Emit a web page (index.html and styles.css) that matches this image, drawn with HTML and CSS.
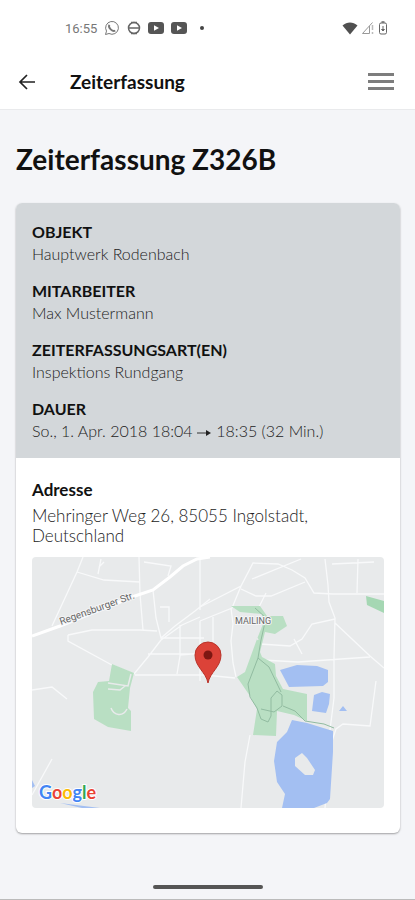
FILE: index.html
```html
<!DOCTYPE html>
<html lang="de">
<head>
  <meta charset="UTF-8">
  <meta name="viewport" content="width=device-width, initial-scale=1.0">
  <title>Zeiterfassung Z326B</title>
  <link rel="stylesheet" href="styles.css">
</head>
<body>
  <div class="status-bar">
    <div class="status-left">
      <span class="clock">16:55</span>
      <svg width="16" height="16" viewBox="0 0 16 16" fill="none" stroke="#777">
        <path d="M1.5 14.5l1-3.4A6.4 6.4 0 1 1 5 13.5z"/>
        <path d="M5.5 4.8c-1 1.2-.3 3 1.200 4.500s3.300 2.200 4.500 1.300" stroke-width="1.900"/>
      </svg>
      <svg width="14" height="14" viewBox="0 0 14 14" fill="none" stroke="#666" stroke-width="1.500">
        <circle cx="7" cy="7" r="5.500"/>
        <path d="M1 7h12M4 1.500h6M4 12.500h6"/>
      </svg>
      <svg width="16" height="12" viewBox="0 0 16 12">
        <rect width="16" height="12" rx="3" fill="#555"/>
        <path d="M6 3.200v5.600L11 6z" fill="#fff"/>
      </svg>
      <svg width="16" height="12" viewBox="0 0 16 12">
        <rect width="16" height="12" rx="3" fill="#555"/>
        <path d="M6 3.200v5.600L11 6z" fill="#fff"/>
      </svg>
      <span class="more-dot"></span>
    </div>
    <div class="status-right">
      <svg width="16" height="13" viewBox="0 0 16 13">
        <path d="M.5 3.500C5-.5 11-.5 15.500 3.500L8 12.500z" fill="#505050"/>
      </svg>
      <svg width="14" height="14" viewBox="0 0 14 14" fill="none" stroke="#999">
        <path d="M11.500 1.500L1.500 12.500h7M8.500 5v7.500"/>
        <path d="M11.500 4v5M11.500 11v2" stroke="#bbb" stroke-width="1.500"/>
      </svg>
      <svg width="10" height="14" viewBox="0 0 10 14" fill="none" stroke="#666">
        <rect x="1.500" y="2" width="7" height="11" rx="1.500"/>
        <path d="M3.500 1h3" stroke-width="1.500"/>
        <path d="M5 5v4M3.500 8.500h3L5 10z" fill="#555"/>
      </svg>
    </div>
  </div>

  <header class="app-header">
    <button class="icon-button" type="button" aria-label="Zurück">
      <svg width="18" height="18" viewBox="0 0 18 18" fill="none" stroke="#222" stroke-width="1.700">
        <path d="M9 2L2 9l7 7M2 9h15"/>
      </svg>
    </button>
    <span class="app-title">Zeiterfassung</span>
    <button class="icon-button menu-button" type="button" aria-label="Menü">
      <span class="menu-line"></span>
      <span class="menu-line"></span>
      <span class="menu-line"></span>
    </button>
  </header>

  <main>
    <h1>Zeiterfassung Z326B</h1>

    <div class="card">
      <dl class="summary">
        <div class="entry">
          <dt>OBJEKT</dt>
          <dd>Hauptwerk Rodenbach</dd>
        </div>
        <div class="entry">
          <dt>MITARBEITER</dt>
          <dd>Max Mustermann</dd>
        </div>
        <div class="entry">
          <dt>ZEITERFASSUNGSART(EN)</dt>
          <dd>Inspektions Rundgang</dd>
        </div>
        <div class="entry">
          <dt>DAUER</dt>
          <dd>So., 1. Apr. 2018 18:04
            <svg class="arrow" width="15" height="8" viewBox="0 0 15 8"><path d="M0 4h10" stroke="#333"/><path d="M9 1l5 3-5 3z" fill="#222"/></svg>
            18:35 (32 Min.)</dd>
        </div>
      </dl>

      <section class="address">
        <h2>Adresse</h2>
        <p>Mehringer Weg 26, 85055 Ingolstadt, Deutschland</p>
        <svg class="map" viewBox="0 0 352 251" role="img" aria-label="Karte">
          <rect width="352" height="251" fill="#e8eaeb"/>
          <!-- side streets -->
          <g fill="none" stroke="#f8f9fa" stroke-width="1.300">
            <path d="M51 0L45 15 20 69M45 15l27 8 36 2M69 2l-3 15M72 5l-5 5M107 0l1 37 3 36M112 5l27 4-3 10M121 33l3 28 5 20 14-12 20-15 15-12M168 1v52"/>
            <path d="M36 78l24-5 48 0 17 1M36 78l0 6 42 23 24 10 14-17 13-17 21-15 18-8M129 81h43M148 81v18l-3 18M116 97h56M103 118h70l30 3M148 68v30l24-2M128 50h9v15"/>
            <path d="M168 50l41-21 12-23 25 1 14 6 13 8 9 15 19 1 51 0M209 32l15 7 15 0 34-14M168 64l32-13 9-22M220 22l49-20M199 51l2 16-2 17 2 22 3 14"/>
            <path d="M293 2l3 26 1 17 6 16-1 40 0 40-4 32M303 62l-23 5-10 15-12 7-30-2M262 82l8 15M303 66l35 33 14 12M338 100l-72 5-36-2M300 7l42-2M326 2l-1 34M344 124l-6 45-27-2-7 5-4 12-7 67"/>
            <path d="M218 178l-5 27-4 46M168 64v60M181 60v40M0 238l20-36M0 133l20-3 15 12M234 36l-9 18"/>
          </g>
          <!-- parks -->
          <g fill="#b9dfc3">
            <path d="M80 107l22 9-4 15-2 20 3 3v20l-23-4-14-8-1-27 5-10 11-1z"/>
            <path d="M199 49l29 0 7 10h16l4 10-12 8-10-2-5 20 2 5 13 7 1 12 7 13 24 5v27l-13-6-17-4-1 25-23-1 4-26-7-13-13-19 8-5 12-33 6-15-1-10-22-2z"/>
            <path d="M334 39l18 5v12l-17-8z" fill="#a5d7b3"/>
          </g>
          <g fill="none" stroke="#e8eaeb" stroke-width="1.500">
            <path d="M76 126l20 3 3-12M79 151c3 8 12 9 16 1M76 132l12 1 5-4M226 83l-1-2"/>
          </g>
          <!-- footpaths -->
          <path d="M223 51l11 10-5 22-3 18-10 26 2 13 7 11 4 11 7 3 3-6 0-18 6-7 5 4 0 11-8 6-13-3M226 101l11 9 12 25M251 149l12 5 10 10 19 3 10 4" fill="none" stroke="#91bba0"/>
          <!-- lakes -->
          <g fill="#a3bff2">
            <path d="M248 113l17-5 20 1 11 4v12l-5 4-34 1z"/>
            <path d="M282 138l8-3 8 2-1 10-3 9-14-2z"/>
            <path d="M307 154l4-5 4 5zM0 223l3 6-3 2zM28 246l40 5H50z"/>
            <path d="M260 163l15 3 26 8 0 21-3 47-3 4-13 5h-32l3-14-8-12-3-21 3-19 10-10z"/>
          </g>
          <path d="M270 196l5 5 8 12-2 5-8 0-10-9v-8z" fill="#e8eaeb"/>
          <!-- main road -->
          <path d="M0 79L28 69l75-30 18-6 17-13 13-11 14-7 13-2" fill="none" stroke="#fff" stroke-width="3"/>
          <text class="map-label" transform="translate(29 68) rotate(-20)">Regensburger Str.</text>
          <text class="map-label place" x="203" y="67">MAILING</text>
          <path d="M176 126c-2-11-13-16-13-28a13 13 0 0 1 26 0c0 12-11 17-13 28z" fill="#dc4238" stroke="#b93329"/>
          <circle cx="176" cy="98" r="4.500" fill="#7d1712"/>
          <text class="map-logo" x="7" y="242"><tspan fill="#4285f4">G</tspan><tspan fill="#ea4335">o</tspan><tspan fill="#fbbc05">o</tspan><tspan fill="#4285f4">g</tspan><tspan fill="#34a853">l</tspan><tspan fill="#ea4335">e</tspan></text>
        </svg>
      </section>
    </div>
  </main>

  <footer class="gesture-bar">
    <span class="gesture-handle"></span>
  </footer>
</body>
</html>
```

FILE: styles.css
```css
* {
  box-sizing: border-box;
}

body {
  margin: 0;
  min-height: 100vh;
  display: flex;
  flex-direction: column;
  font-family: Lato, "Open Sans", sans-serif;
  font-size: 16px;
  color: #111;
  background: #f4f5f8;
}

svg {
  flex-shrink: 0;
}

/* Status bar */
.status-bar {
  display: flex;
  justify-content: space-between;
  align-items: center;
  height: 56px;
  padding: 0 27px 0 65px;
  background: #fff;
}

.status-left,
.status-right {
  display: flex;
  align-items: center;
}

.status-left {
  gap: 7px;
}

.status-right {
  gap: 3px;
}

.clock {
  font-family: Roboto, sans-serif;
  font-size: 13px;
  color: #777;
}

.more-dot {
  width: 4px;
  height: 4px;
  margin-left: 6px;
  border-radius: 50%;
  background: #444;
}

/* App header */
.app-header {
  display: flex;
  align-items: center;
  height: 54px;
  padding: 0 21px 2px 18px;
  background: #fff;
  border-bottom: 1px solid #e9eaec;
}

.icon-button {
  display: flex;
  padding: 0;
  border: none;
  background: none;
  cursor: pointer;
}

.app-title {
  margin-left: 34px;
  font-size: 19px;
  font-weight: 700;
}

.menu-button {
  flex-direction: column;
  gap: 4px;
  width: 26px;
  margin-left: auto;
}

.menu-line {
  width: 100%;
  height: 3px;
  background: #7d7d7d;
}

/* Content */
main {
  flex: 1;
  padding: 32px 15px 0 16px;
}

h1 {
  margin: 0 0 27px;
  font-size: 28px;
  line-height: 34px;
  font-weight: 700;
}

.card {
  overflow: hidden;
  background: #fff;
  border-radius: 6px;
  box-shadow: 0 1px 2px rgba(0, 0, 0, 0.35);
}

.summary {
  display: flex;
  flex-direction: column;
  gap: 15px;
  margin: 0;
  padding: 18px 16px 16px;
  background: #d3d7da;
}

dt {
  line-height: 22px;
  font-weight: 700;
}

dd {
  margin: 0;
  line-height: 22px;
  font-weight: 300;
  color: #222;
}

.arrow {
  vertical-align: middle;
}

.address {
  padding: 22px 16px 25px;
}

h2 {
  margin: 0 0 6px;
  font-size: 17px;
  line-height: 20px;
  font-weight: 700;
}

.address p {
  margin: 0 0 11px;
  font-size: 17px;
  line-height: 20px;
  font-weight: 300;
  color: #222;
}

.map {
  display: block;
  width: 100%;
  border-radius: 4px;
}

.map-label {
  font-family: Roboto, sans-serif;
  font-size: 10px;
  fill: #666;
  stroke: #f4f5f6;
  stroke-width: 2px;
  paint-order: stroke;
}

.map-label.place {
  font-size: 9px;
}

.map-logo {
  font-family: Lato, sans-serif;
  font-size: 18px;
  font-weight: 700;
  stroke: #fff;
  stroke-width: 2px;
  paint-order: stroke;
}

/* Gesture navigation */
.gesture-bar {
  display: flex;
  justify-content: center;
  padding: 0 0 10px;
  border-bottom: 1px solid #bbb;
}

.gesture-handle {
  width: 110px;
  height: 4px;
  border-radius: 2px;
  background: #555;
}
```
